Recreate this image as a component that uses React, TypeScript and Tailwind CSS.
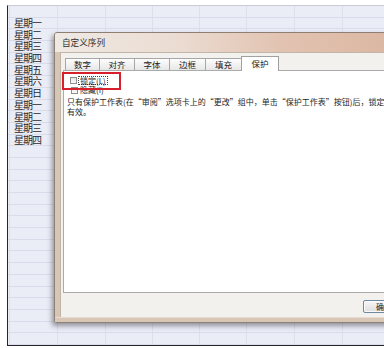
import React from "react";

const FONT = '"Noto Sans CJK SC", "Noto Sans", sans-serif';

const days = [
  "星期一",
  "星期二",
  "星期三",
  "星期四",
  "星期五",
  "星期六",
  "星期日",
  "星期一",
  "星期二",
  "星期三",
  "星期四",
];

const colWidths = ["w-[2px]", "w-[48px]", "w-[48px]", "w-[47px]", "w-[47px]", "w-[47px]", "w-[48px]", "w-[48px]", "w-[48px]"];

function Sheet() {
  const rows = Array.from({ length: 30 });
  return (
    <div className="ml-[7px] mt-[5px] h-[341px] w-[400px] overflow-hidden border-t border-l border-b border-t-[#c9ccd8] border-l-[#262626] border-b-[#262626] bg-[#eaecf6]">
      {rows.map((_, r) => (
        <div key={r} className="flex h-[11.7px] border-b border-[#d9dcea]">
          {colWidths.map((w, c) => (
            <div key={c} className={`${w} shrink-0 h-full border-r border-[#dcdfec] flex items-center`}>
              {c === 1 && r >= 1 && r <= 11 ? (
                <span className="pl-[4px] text-[10px] leading-none tracking-[-1px] text-[#2a2a2a] whitespace-nowrap">
                  {days[r - 1]}
                </span>
              ) : null}
            </div>
          ))}
        </div>
      ))}
    </div>
  );
}

const tabs = [
  { label: "数字", w: "w-[35px]" },
  { label: "对齐", w: "w-[36px]" },
  { label: "字体", w: "w-[36px]" },
  { label: "边框", w: "w-[37px]" },
  { label: "填充", w: "w-[37px]" },
];

function Dialog() {
  return (
    <div className="absolute left-[54px] top-[32px] w-[350px] h-[291px] rounded-[3px] border border-[#8e7f72] bg-[#d7c7b6] shadow-[-2px_3px_5px_rgba(40,40,50,0.45)] flex flex-col">
      {/* title bar */}
      <div className="h-[19px] shrink-0 flex items-center pl-[7px] rounded-t-[2px] bg-[linear-gradient(to_right,#efe9e4_0%,#ebdcd2_35%,#e2c3b1_65%,#dbb6a1_100%)]">
        <span className="text-[8.6px] leading-none text-[#2e2e2e]">自定义序列</span>
      </div>
      <div className="flex flex-1">
        <div className="w-[5px] shrink-0 bg-[#d6c6b5]" />
        {/* client */}
        <div className="flex-1 flex flex-col bg-[#f3f1ee] border-l border-t border-[#c2b6a9]">
          {/* tabs */}
          <div className="h-[17px] shrink-0 flex items-end pl-[4px]">
            {tabs.map((t, i) => (
              <div
                key={t.label}
                className={`${t.w} h-[12px] ${i === 0 ? "" : "-ml-px"} border border-b-0 border-[#a6a6a6] bg-[linear-gradient(to_bottom,#fdfdfd,#e7e7e7)] flex items-center justify-center text-[8.5px] leading-none text-[#222]`}
              >
                {t.label}
              </div>
            ))}
            <div className="relative z-10 -ml-px -mb-px w-[38px] h-[15px] border border-b-0 border-[#a0a0a0] bg-white flex items-center justify-center text-[8.5px] leading-none text-[#222] pb-[1px]">
              保护
            </div>
          </div>
          {/* panel */}
          <div className="ml-[2px] h-[223px] shrink-0 border border-[#ababab] bg-white flex flex-col pt-[5px]">
            <div className="h-[9px] flex items-center pl-[6px] gap-[1px]">
              <div className="w-[7px] h-[7px] border border-[#8e8e8e] bg-[linear-gradient(to_bottom,#e6e6e6,#fafafa)]" />
              <span className="border border-dotted border-[#444] px-[1px] text-[8px] leading-[7px] text-[#1e1e1e] whitespace-nowrap">
                锁定(L)
              </span>
            </div>
            <div className="h-[10px] flex items-center pl-[7px] gap-[2px]">
              <div className="w-[7px] h-[7px] border border-[#8e8e8e] bg-[linear-gradient(to_bottom,#e6e6e6,#fafafa)]" />
              <span className="text-[8px] leading-none text-[#1e1e1e] whitespace-nowrap">隐藏(I)</span>
            </div>
            <div className="mt-[2px] pl-[3px] text-[8px] leading-[9.5px] text-[#1e1e1e] whitespace-nowrap">
              只有保护工作表(在“审阅”选项卡上的“更改”组中，单击“保护工作表”按钮)后，锁定单元格或隐藏公式才
              <br />
              有效。
            </div>
          </div>
          {/* footer */}
          <div className="flex-1 pt-[7px] pl-[302px]">
            <div className="w-[42px] h-[13px] rounded-[2px] border border-[#6f8aa0] bg-[linear-gradient(to_bottom,#f7f7f7,#dedede)] flex items-center justify-center text-[8px] leading-none text-[#222] shadow-[inset_0_0_0_1px_rgba(255,255,255,0.8)]">
              确定
            </div>
          </div>
        </div>
      </div>
      <div className="h-[5px] shrink-0 bg-[#d8c6b6] border-t border-[#e8dcd2]" />
    </div>
  );
}

export default function App() {
  return (
    <div className="relative w-[384px] h-[348px] bg-white overflow-hidden" style={{ fontFamily: FONT }}>
      <Sheet />
      <Dialog />
      {/* red annotation box */}
      <div className="absolute left-[62px] top-[72px] w-[59px] h-[18px] border-[2.5px] border-[#d8202c]" />
    </div>
  );
}
